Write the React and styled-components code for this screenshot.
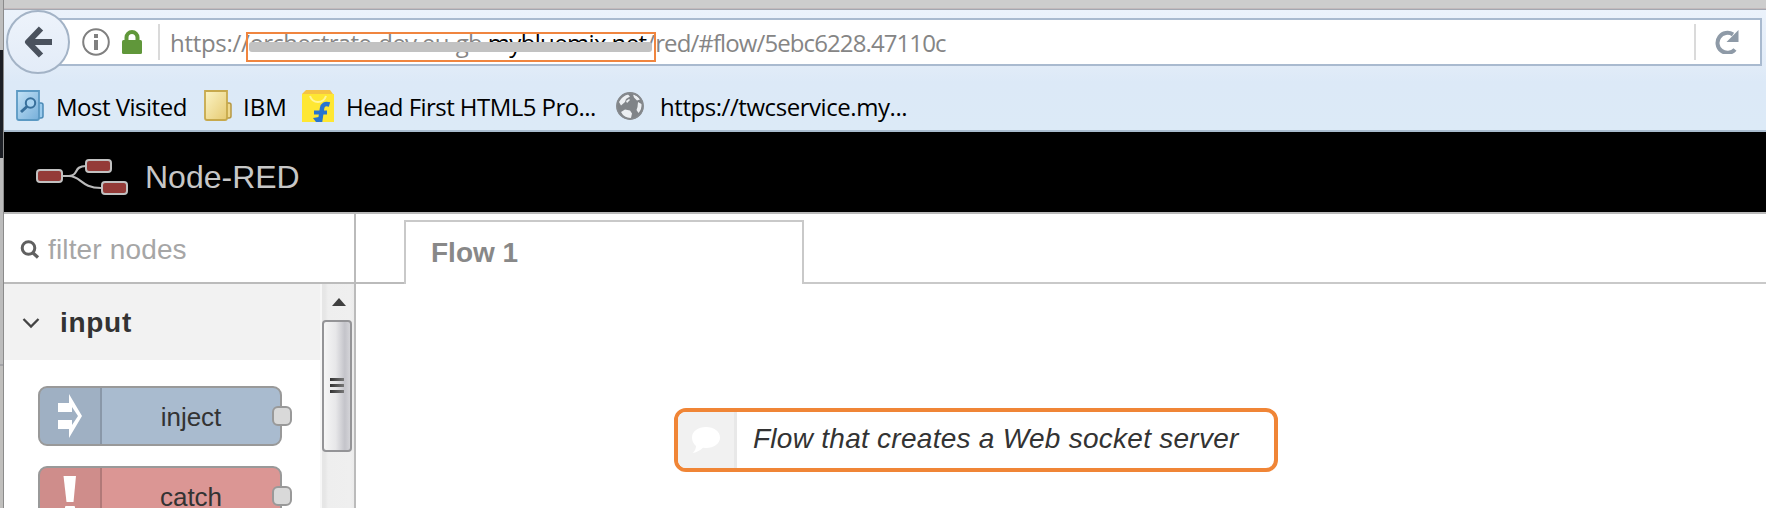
import React from "react";
import styled, { createGlobalStyle } from "styled-components";

const GlobalStyle = createGlobalStyle`
  *, *::before, *::after { box-sizing: border-box; }
  html, body { margin: 0; overflow: hidden; background: #fff; }
  svg { display: block; flex: none; }
`;

const Screen = styled.div`
  display: flex;
  width: 1766px;
  height: 508px;
  overflow: hidden;
  font-family: "Liberation Sans", Arial, sans-serif;
`;

const Backdrop = styled.div`
  width: 4px;
  flex: none;
  display: flex;
  flex-direction: column;
  border-right: 1px solid #8b8b8b;
`;

const BackdropPiece = styled.div`
  height: ${(p) => p.$height}px;
  background: ${(p) => p.$color};
`;

const Browser = styled.div`
  flex: 1;
  min-width: 0;
  display: flex;
  flex-direction: column;
`;

const WindowEdge = styled.div`
  height: 10px;
  flex: none;
  background: #cdcdcd;
  border-bottom: 1px solid #a3a7b1;
  box-shadow: inset 0 -1px #c3babc;
`;

const Chrome = styled.div`
  height: 122px;
  flex: none;
  display: flex;
  flex-direction: column;
  background: linear-gradient(#ebf2fb 0, #e2ecf8 45%, #dce9f7 60%, #dceaf7 100%);
  border-bottom: 2px solid #a9bccf;
  font-family: "Open Sans", "Noto Sans", sans-serif;
  font-size: 24px;
`;

const NavRow = styled.div`
  height: 64px;
  flex: none;
  display: flex;
  align-items: center;
  padding: 0 4px 0 2px;
`;

const BackButton = styled.div`
  width: 64px;
  height: 64px;
  flex: none;
  z-index: 1;
  display: flex;
  align-items: center;
  justify-content: center;
  border: 2px solid #a3b3c6;
  border-radius: 50%;
  background: linear-gradient(#edf3fb, #e3ecf8);
`;

const AddressBar = styled.div`
  flex: 1;
  height: 48px;
  margin-left: -12px;
  display: flex;
  align-items: center;
  background: #fff;
  border: 2px solid #a9bacf;
  border-left: 0;
  padding: 0 21px 0 24px;
`;

const BarDivider = styled.div`
  width: 2px;
  height: 36px;
  background: #dadada;
  margin: ${(p) => p.$margin};
`;

const Url = styled.div`
  flex: 1;
  display: flex;
  align-items: center;
  line-height: 40px;
  margin-top: 2px;
  color: #858585;
  white-space: pre;
  font-variant-ligatures: none;
`;

const UrlPart = styled.span`
  letter-spacing: ${(p) => p.$tracking}px;
  color: ${(p) => (p.$strong ? "#000" : "inherit")};
`;

const HostMark = styled.span`
  position: relative;
  display: flex;
`;

const MarkFrame = styled.span`
  position: absolute;
  left: -3px;
  top: 9px;
  width: 410px;
  height: 30px;
  border: 2px solid #f0853f;
  display: flex;
  align-items: flex-start;
  padding: 8px 2px 0 1px;
`;

const Strike = styled.span`
  flex: 1;
  height: 10px;
  border-radius: 3px;
  background: #c2c2c2;
`;

const Bookmarks = styled.div`
  flex: 1;
  display: flex;
  align-items: center;
  padding: 8px 0 0 12px;
  color: #000;
`;

const Bookmark = styled.div`
  display: flex;
  align-items: center;
  gap: ${(p) => p.$gap}px;
  width: ${(p) => p.$width}px;
  letter-spacing: ${(p) => p.$tracking}px;
  white-space: nowrap;
  line-height: 32px;
`;

const BookmarkLabel = styled.span`
  padding-top: 2px;
`;

const AppHeader = styled.div`
  height: 82px;
  flex: none;
  display: flex;
  align-items: center;
  gap: 17px;
  padding: 10px 0 0 30px;
  background: #000;
  border-bottom: 2px solid #b9b9b9;
  color: #c7c7c7;
  font-size: 32px;
`;

const Editor = styled.div`
  flex: 1;
  min-height: 0;
  display: flex;
`;

const Palette = styled.div`
  width: 352px;
  flex: none;
  display: flex;
  flex-direction: column;
  border-right: 2px solid #bbb;
`;

const Filter = styled.div`
  height: 70px;
  flex: none;
  display: flex;
  align-items: center;
  gap: 8px;
  padding: 4px 0 0 16px;
  border-bottom: 2px solid #bbb;
  color: #a6a6a6;
  font-size: 28px;
  letter-spacing: 0.15px;
`;

const PaletteBody = styled.div`
  flex: 1;
  min-height: 0;
  display: flex;
`;

const NodeList = styled.div`
  flex: 1;
  overflow: hidden;
`;

const Category = styled.div`
  height: 76px;
  display: flex;
  align-items: center;
  gap: 19px;
  padding: 1px 0 0 18px;
  background: #f2f2f2;
  color: #333;
  font-size: 28px;
  font-weight: 700;
  letter-spacing: 0.7px;
`;

const Nodes = styled.div`
  display: flex;
  flex-direction: column;
  gap: 20px;
  padding: 26px 0 0 34px;
`;

const PaletteNode = styled.div`
  width: 244px;
  height: 60px;
  flex: none;
  position: relative;
  display: flex;
  border: 2px solid #999;
  border-radius: 9px;
  background: ${(p) => p.$color};
  color: #333;
  font-size: 26px;
`;

const NodeIcon = styled.div`
  width: 62px;
  display: flex;
  align-items: center;
  justify-content: center;
  padding-right: 1px;
  border-right: 2px solid rgba(0, 0, 0, 0.14);
  border-radius: 7px 0 0 7px;
  background: rgba(0, 0, 0, 0.055);
`;

const NodeLabel = styled.div`
  flex: 1;
  text-align: center;
  line-height: 58px;
`;

const Port = styled.div`
  position: absolute;
  right: -12px;
  top: 18px;
  width: 20px;
  height: 20px;
  border: 2px solid #999;
  border-radius: 6px;
  background: #d9d9d9;
`;

const Scrollbar = styled.div`
  width: 34px;
  display: flex;
  flex-direction: column;
  align-items: flex-start;
  padding-left: 2px;
  background: linear-gradient(90deg, #f7f7f7 0 2px, #e6e6e6 2px 5px, #eee 8px, #efefef 30px, #ebebeb);
`;

const ScrollUp = styled.div`
  width: 32px;
  height: 36px;
  display: flex;
  justify-content: center;
  padding: 14px 0 0 1px;
`;

const Thumb = styled.div`
  width: 30px;
  height: 132px;
  display: flex;
  flex-direction: column;
  align-items: center;
  justify-content: center;
  gap: 3px;
  padding-bottom: 1px;
  border: 2px solid #949497;
  border-radius: 4px;
  background: linear-gradient(90deg, #f6f6f6, #e7e7e9 45%, #c4c4ca 80%, #d4d4d8);
`;

const Grip = styled.div`
  width: 14px;
  height: 3px;
  background: linear-gradient(90deg, #333, #777);
`;

const Workspace = styled.div`
  flex: 1;
  min-width: 0;
  display: flex;
  flex-direction: column;
`;

const TabBar = styled.div`
  height: 70px;
  flex: none;
  display: flex;
  align-items: flex-end;
`;

const TabRule = styled.div`
  width: ${(p) => (p.$width ? `${p.$width}px` : "auto")};
  flex: ${(p) => (p.$width ? "none" : 1)};
  height: 2px;
  background: ${(p) => p.$color};
`;

const Tab = styled.div`
  width: 400px;
  height: 64px;
  padding-left: 25px;
  border: 2px solid #c9c9c9;
  border-bottom: 0;
  line-height: 62px;
  color: #888;
  font-size: 28px;
  font-weight: 700;
`;

const Canvas = styled.div`
  flex: 1;
  padding: 124px 0 0 318px;
`;

const CommentNode = styled.div`
  width: 604px;
  height: 64px;
  display: flex;
  overflow: hidden;
  border: 4px solid #f08536;
  border-radius: 12px;
  background: #fff;
`;

const CommentIcon = styled.div`
  width: 59px;
  flex: none;
  display: flex;
  align-items: center;
  justify-content: center;
  background: #f1f1f1;
  border-right: 3px solid #e8e8e8;
`;

const CommentText = styled.div`
  padding-left: 16px;
  line-height: 54px;
  color: #333;
  font-size: 28px;
  font-style: italic;
  letter-spacing: 0.27px;
  white-space: nowrap;
`;

const BackArrow = () => (
  <svg width="28" height="32" viewBox="0 0 28 32" fill="none" stroke="#4a525e" strokeWidth="6">
    <path d="M17 2.5L4 16l13 13.500M5 16h23" strokeLinejoin="round" />
  </svg>
);

const InfoIcon = () => (
  <svg width="28" height="28" viewBox="0 0 28 28">
    <circle cx="14" cy="14" r="12.800" fill="#fff" stroke="#808080" strokeWidth="2" />
    <path d="M12 6h4v4h-4zM12 12h4v10h-4z" fill="#808080" />
  </svg>
);

const LockIcon = () => (
  <svg width="20" height="24" viewBox="0 0 20 24">
    <path d="M4.500 12V7.500a5.500 5.500 0 0 1 11 0V12" fill="none" stroke="#60973a" strokeWidth="4" />
    <rect y="10" width="20" height="14" rx="1.500" fill="#60973a" />
  </svg>
);

const ReloadIcon = () => (
  <svg width="24" height="24" viewBox="0 0 24 24">
    <path d="M20 19.500A10 10 0 1 1 18 4.500" fill="none" stroke="#8e9aa7" strokeWidth="4" />
    <path d="M23.500 0v12H11.500z" fill="#8e9aa7" />
  </svg>
);

const MostVisitedIcon = () => (
  <svg width="28" height="32" viewBox="0 0 28 32">
    <defs>
      <linearGradient id="blueFolder" x1="0" y1="0" x2="1" y2="1">
        <stop offset="0" stopColor="#c3e2f6" />
        <stop offset="1" stopColor="#76afda" />
      </linearGradient>
    </defs>
    <path d="M20 13h5a2 2 0 0 1 2 2v11a2 2 0 0 1-2 2h-5z" fill="#9bcbed" stroke="#4b8ab6" strokeWidth="1.500" />
    <path d="M1 1h22v27q0 2-2 2H3q-2 0-2-2z" fill="url(#blueFolder)" stroke="#5b99c3" strokeWidth="1.800" />
    <circle cx="14.500" cy="13" r="4.700" fill="#a8d3f0" stroke="#376f9b" strokeWidth="2" />
    <path d="M11 16.500L5 22" stroke="#376f9b" strokeWidth="3" />
  </svg>
);

const FolderIcon = () => (
  <svg width="28" height="32" viewBox="0 0 28 32">
    <defs>
      <linearGradient id="yellowFolder" x1="0" y1="0" x2="1" y2="1">
        <stop offset="0" stopColor="#fbf4c5" />
        <stop offset="1" stopColor="#e6ca72" />
      </linearGradient>
    </defs>
    <path d="M20 13h5a2 2 0 0 1 2 2v11a2 2 0 0 1-2 2h-5z" fill="#efd98e" stroke="#b69843" strokeWidth="1.500" />
    <path d="M1 1h22v27q0 2-2 2H3q-2 0-2-2z" fill="url(#yellowFolder)" stroke="#c7a94c" strokeWidth="1.800" />
  </svg>
);

const ShopIcon = () => (
  <svg width="32" height="32" viewBox="0 0 32 32">
    <path d="M0 4h32v28H0z" fill="#fee733" />
    <path d="M4 0h24l3 4H0z" fill="#f5c344" />
    <path d="M8 6q2 6 8 6t8-6" fill="none" stroke="#fff59b" strokeWidth="2" />
    <path d="M27.500 14.500q-6.500-2-7.500 4l-2 13.500" fill="none" stroke="#2874d0" strokeWidth="4.500" />
    <path d="M12 22.500h13" stroke="#2874d0" strokeWidth="4" />
    <path d="M11 28l6-1v5h-3z" fill="#2874d0" />
  </svg>
);

const GlobeIcon = () => (
  <svg width="28" height="28" viewBox="0 0 28 28">
    <circle cx="14" cy="14" r="13.500" fill="#808488" />
    <path d="M3 10q3-6 9-7.500l2 2-4 2.500-1 3-4 3.500zM17 2.500q4.500 1 7 5l-3 1-3-3zM22 10l3.500 2q.5 5-3 9l-2-3 1-3zM5 20l4-2.500 5 1 2 3-1 4.500q-7 0-10-6zM10 9l3-2 1 1-3 3z" fill="#eceff2" />
    <circle cx="14" cy="14" r="13" fill="none" stroke="#85898d" strokeWidth="1.800" />
  </svg>
);

const NodeRedLogo = () => (
  <svg width="92" height="37" viewBox="0 0 92 37">
    <path d="M27 17h6c10 0 4-10 17-10M33 17c12 0 12 12 32 12" fill="none" stroke="#bbb" strokeWidth="2.200" />
    <g fill="#943b38" stroke="#c1c1c1" strokeWidth="2">
      <rect x="1" y="11" width="25" height="12" rx="3" />
      <rect x="50" y="1" width="25" height="12" rx="3" />
      <rect x="66" y="23" width="25" height="12" rx="3" />
    </g>
  </svg>
);

const SearchIcon = () => (
  <svg width="20" height="20" viewBox="0 0 20 20" fill="none" stroke="#606060">
    <circle cx="8.500" cy="8" r="6.300" strokeWidth="3" />
    <path d="M12.500 12.500l5.500 5" strokeWidth="3.300" />
  </svg>
);

const ChevronIcon = () => (
  <svg width="19" height="12" viewBox="0 0 19 12" fill="none" stroke="#444" strokeWidth="2.300">
    <path d="M1.500 2l7.500 7.500L16.500 2" />
  </svg>
);

const InjectIcon = () => (
  <svg width="26" height="46" viewBox="0 0 26 46">
    <path
      d="M1 10h11V1l13 22-13 22v-9H1v-9h14v5l6-9-6-9v5H1z"
      fill="#fff"
    />
  </svg>
);

const AlertIcon = () => (
  <svg width="16" height="42" viewBox="0 0 16 42" fill="#fff">
    <path d="M1.500 1h12.500L11.500 27h-7z" />
    <rect x="3" y="31" width="10" height="9" rx="1" />
  </svg>
);

const BubbleIcon = () => (
  <svg width="30" height="28" viewBox="0 0 30 28">
    <path d="M15 1c8 0 14 4.500 14 10.500S23 22 15 22l-3-.2C9 25 5 26.500 1.500 27c2.500-2 3.500-4.500 3.500-7C2.500 18 1 15 1 11.500 1 5.500 7 1 15 1z" fill="#fff" />
  </svg>
);

const UpArrow = () => (
  <svg width="14" height="8" viewBox="0 0 14 8">
    <path d="M7 0l7 8H0z" fill="#3f3f3f" />
  </svg>
);

const IconSlot = styled.div`
  display: flex;
  margin-left: ${(p) => p.$before}px;
`;

const bookmarks = [
  { label: "Most Visited", icon: <MostVisitedIcon />, gap: 12, width: 188, tracking: -0.5 },
  { label: "IBM", icon: <FolderIcon />, gap: 11, width: 98, tracking: 0 },
  { label: "Head First HTML5 Pro...", icon: <ShopIcon />, gap: 12, width: 314, tracking: -0.55 },
  { label: "https://twcservice.my...", icon: <GlobeIcon />, gap: 16, width: 300, tracking: -0.44 },
];

const paletteNodes = [
  { label: "inject", color: "#a9bbcf", icon: <InjectIcon /> },
  { label: "catch", color: "#db9694", icon: <AlertIcon /> },
];

export default function App() {
  return (
    <Screen>
      <GlobalStyle />
      <Backdrop>
        <BackdropPiece $height={50} $color="#bdbdbd" />
        <BackdropPiece $height={108} $color="#1c1f25" />
        <BackdropPiece $height={206} $color="#bcbcbc" />
        <BackdropPiece $height={2} $color="#a4a4a8" />
        <BackdropPiece $height={142} $color="#c0bfbd" />
      </Backdrop>
      <Browser>
        <WindowEdge />
        <Chrome>
          <NavRow>
            <BackButton>
              <BackArrow />
            </BackButton>
            <AddressBar>
              <InfoIcon />
              <IconSlot $before={12}>
                <LockIcon />
              </IconSlot>
              <BarDivider $margin="0 10px 0 16px" />
              <Url>
                <UrlPart $tracking={-0.3}>https://</UrlPart>
                <HostMark>
                  <UrlPart $tracking={-0.68}>orchestrate-dev.eu-gb.</UrlPart>
                  <UrlPart $tracking={-0.65} $strong>mybluemix.net</UrlPart>
                  <UrlPart $tracking={0}>/</UrlPart>
                  <MarkFrame>
                    <Strike />
                  </MarkFrame>
                </HostMark>
                <UrlPart $tracking={-0.9}>red/#flow/5ebc6228.47110c</UrlPart>
              </Url>
              <BarDivider $margin="0 19px 0 0" />
              <ReloadIcon />
            </AddressBar>
          </NavRow>
          <Bookmarks>
            {bookmarks.map((b) => (
              <Bookmark key={b.label} $gap={b.gap} $width={b.width} $tracking={b.tracking}>
                {b.icon}
                <BookmarkLabel>{b.label}</BookmarkLabel>
              </Bookmark>
            ))}
          </Bookmarks>
        </Chrome>
        <AppHeader>
          <IconSlot $before={2}>
            <NodeRedLogo />
          </IconSlot>
          Node-RED
        </AppHeader>
        <Editor>
          <Palette>
            <Filter>
              <SearchIcon />
              filter nodes
            </Filter>
            <PaletteBody>
              <NodeList>
                <Category>
                  <ChevronIcon />
                  input
                </Category>
                <Nodes>
                  {paletteNodes.map((n) => (
                    <PaletteNode key={n.label} $color={n.color}>
                      <NodeIcon>{n.icon}</NodeIcon>
                      <NodeLabel>{n.label}</NodeLabel>
                      <Port />
                    </PaletteNode>
                  ))}
                </Nodes>
              </NodeList>
              <Scrollbar>
                <ScrollUp>
                  <UpArrow />
                </ScrollUp>
                <Thumb>
                  <Grip />
                  <Grip />
                  <Grip />
                </Thumb>
              </Scrollbar>
            </PaletteBody>
          </Palette>
          <Workspace>
            <TabBar>
              <TabRule $width={48} $color="#bbb" />
              <Tab>Flow 1</Tab>
              <TabRule $color="#c9c9c9" />
            </TabBar>
            <Canvas>
              <CommentNode>
                <CommentIcon>
                  <BubbleIcon />
                </CommentIcon>
                <CommentText>Flow that creates a Web socket server</CommentText>
              </CommentNode>
            </Canvas>
          </Workspace>
        </Editor>
      </Browser>
    </Screen>
  );
}
